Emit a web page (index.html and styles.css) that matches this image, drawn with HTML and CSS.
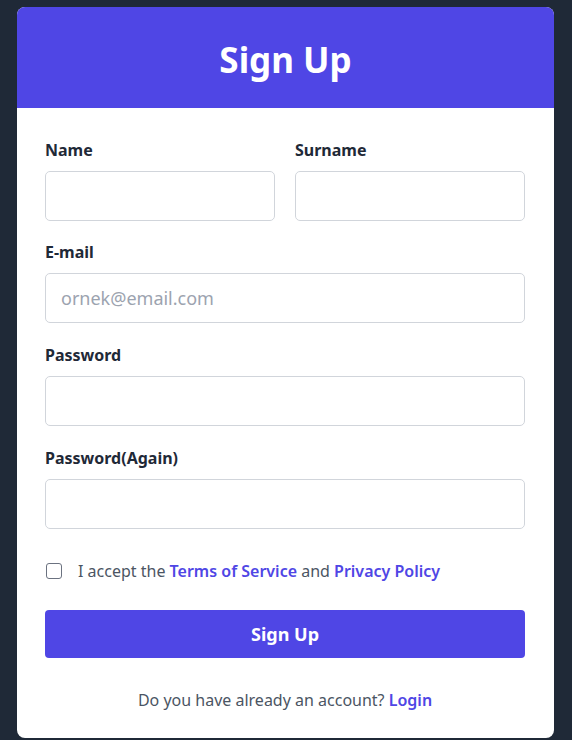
FILE: index.html
```html
<!DOCTYPE html>
<html lang="en">
<head>
<meta charset="utf-8">
<title>Sign Up</title>
<link rel="stylesheet" href="styles.css">
</head>
<body>
<div class="card">
  <div class="card-header"><h1 class="title">Sign Up</h1></div>
  <form class="card-body">
    <div class="row-2">
      <div class="field">
        <label class="label">Name</label>
        <input class="input" type="text">
      </div>
      <div class="field">
        <label class="label">Surname</label>
        <input class="input" type="text">
      </div>
    </div>
    <div class="field">
      <label class="label">E-mail</label>
      <input class="input" type="email" placeholder="ornek@email.com">
    </div>
    <div class="field">
      <label class="label">Password</label>
      <input class="input" type="password">
    </div>
    <div class="field">
      <label class="label">Password(Again)</label>
      <input class="input" type="password">
    </div>
    <div class="accept">
      <span class="checkbox"></span>
      <span class="accept-text">I accept the <a class="link" href="#">Terms of Service</a> and <a class="link" href="#">Privacy Policy</a></span>
    </div>
    <button class="submit" type="button">Sign Up</button>
    <p class="footer">Do you have already an account? <a class="link" href="#">Login</a></p>
  </form>
</div>
</body>
</html>
```

FILE: styles.css
```css
* { box-sizing: border-box; }
html, body { margin: 0; padding: 0; }
body {
  background: #1f2937;
  font-family: "Noto Sans", "Open Sans", sans-serif;
  color: #374151;
  padding: 7px 18px 0 17px;
}
.card {
  background: #fff;
  border-radius: 8px;
  overflow: hidden;
  height: 731px;
}
.card-header {
  background: #4f46e5;
  height: 101px;
  display: flex;
  align-items: center;
  justify-content: center;
}
.title {
  margin: 0;
  color: #fff;
  font-size: 35px;
  font-weight: 700;
  line-height: 1;
  padding-top: 4px;
}
.card-body {
  padding: 30px 29px 0 28px;
  display: flex;
  flex-direction: column;
  gap: 20px;
}
.row-2 {
  display: grid;
  grid-template-columns: 1fr 1fr;
  gap: 20px;
  margin-bottom: -1px;
}
.field { display: flex; flex-direction: column; min-width: 0; }
.label {
  font-size: 16px;
  font-weight: 700;
  line-height: 24px;
  color: #1f2937;
  margin-bottom: 9px;
}
.input {
  width: 100%;
  min-width: 0;
  height: 50px;
  border: 1px solid #d1d5db;
  border-radius: 5px;
  padding: 0 15px;
  font-family: inherit;
  font-size: 18px;
  color: #374151;
  outline: none;
}
.input::placeholder { color: #9ca3af; }
.accept {
  display: flex;
  align-items: center;
  gap: 16px;
  margin-top: 11px;
  padding-left: 1px;
}
.checkbox {
  width: 16px;
  height: 16px;
  border: 1px solid #6b7280;
  border-radius: 3px;
  flex: none;
}
.accept-text { font-size: 16px; color: #4b5563; }
.link {
  color: #4f46e5;
  font-weight: 600;
  text-decoration: none;
}
.submit {
  margin-top: 8px;
  height: 48px;
  border: 0;
  border-radius: 4px;
  background: #4f46e5;
  color: #fff;
  font-family: inherit;
  font-size: 18px;
  font-weight: 700;
}
.footer {
  margin: 11px 0 0;
  text-align: center;
  font-size: 16px;
  color: #4b5563;
}
```
